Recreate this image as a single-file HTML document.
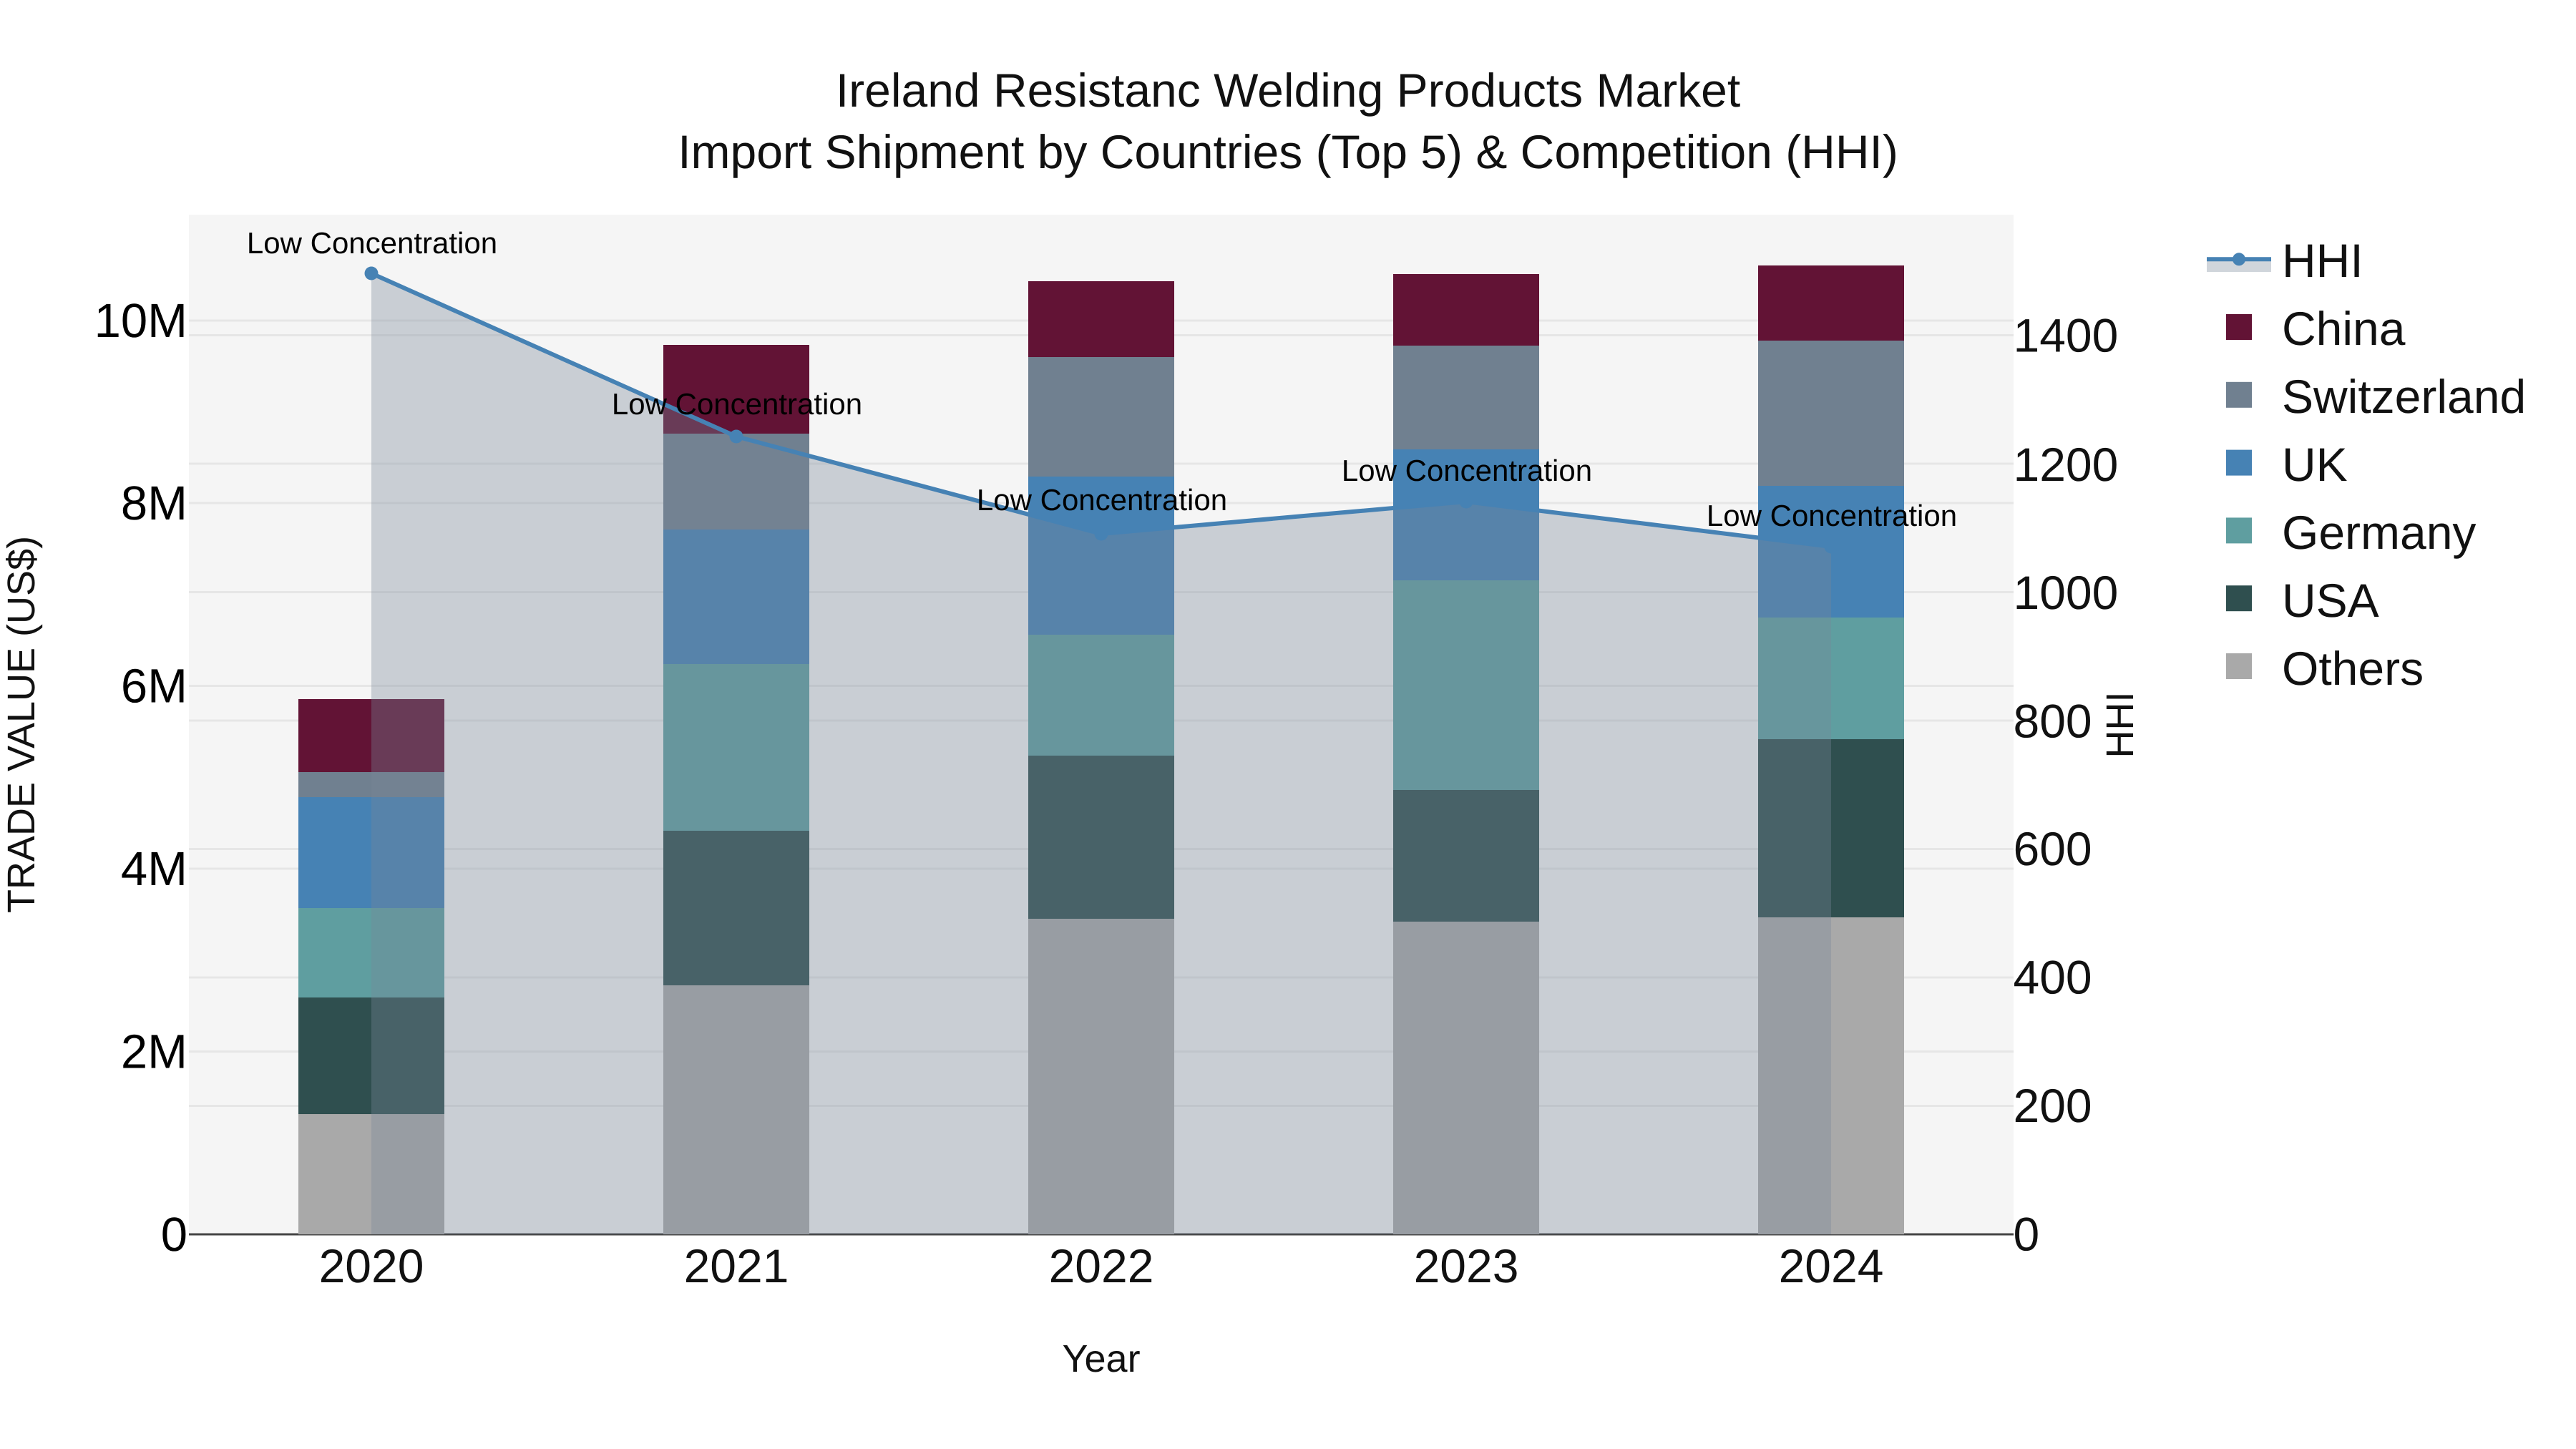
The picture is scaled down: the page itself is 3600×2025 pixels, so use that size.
<!DOCTYPE html>
<html lang="en">
<head>
<meta charset="utf-8">
<title>Ireland Resistanc Welding Products Market</title>
<style>
html,body{margin:0;padding:0;background:#fff;width:3600px;height:2025px;overflow:hidden}
svg{display:block}
text{font-family:"Liberation Sans",Arial,sans-serif;fill:#111;text-rendering:geometricPrecision}
</style>
</head>
<body>
<svg xmlns="http://www.w3.org/2000/svg" width="3600" height="2025" viewBox="0 0 3600 2025">
<rect width="3600" height="2025" fill="#fff"/>
<rect x="264" y="300" width="2550" height="1425" fill="#f5f5f5"/>

<!-- gridlines -->
<g stroke="#e6e6e6" stroke-width="3">
<path d="M264 1469.5H2814M264 1214H2814M264 958.5H2814M264 703H2814M264 448H2814"/>
<path d="M264 1545.5H2814M264 1366H2814M264 1186.5H2814M264 1007H2814M264 827.5H2814M264 648H2814M264 468.5H2814"/>
</g>
<path d="M264 1725H2814" stroke="#444" stroke-width="3"/>

<!-- bars -->
<g>
<rect x="417" y="977" width="204" height="102" fill="#621335"/>
<rect x="417" y="1079" width="204" height="35" fill="#708090"/>
<rect x="417" y="1114" width="204" height="155" fill="#4682b4"/>
<rect x="417" y="1269" width="204" height="125" fill="#5f9ea0"/>
<rect x="417" y="1394" width="204" height="163" fill="#2f4f4f"/>
<rect x="417" y="1557" width="204" height="168" fill="#a9a9a9"/>

<rect x="927" y="482" width="204" height="124" fill="#621335"/>
<rect x="927" y="606" width="204" height="134" fill="#708090"/>
<rect x="927" y="740" width="204" height="188" fill="#4682b4"/>
<rect x="927" y="928" width="204" height="233" fill="#5f9ea0"/>
<rect x="927" y="1161" width="204" height="216" fill="#2f4f4f"/>
<rect x="927" y="1377" width="204" height="348" fill="#a9a9a9"/>

<rect x="1437" y="393" width="204" height="106" fill="#621335"/>
<rect x="1437" y="499" width="204" height="167" fill="#708090"/>
<rect x="1437" y="666" width="204" height="221" fill="#4682b4"/>
<rect x="1437" y="887" width="204" height="169" fill="#5f9ea0"/>
<rect x="1437" y="1056" width="204" height="228" fill="#2f4f4f"/>
<rect x="1437" y="1284" width="204" height="441" fill="#a9a9a9"/>

<rect x="1947" y="383" width="204" height="100" fill="#621335"/>
<rect x="1947" y="483" width="204" height="145" fill="#708090"/>
<rect x="1947" y="628" width="204" height="183" fill="#4682b4"/>
<rect x="1947" y="811" width="204" height="293" fill="#5f9ea0"/>
<rect x="1947" y="1104" width="204" height="184" fill="#2f4f4f"/>
<rect x="1947" y="1288" width="204" height="437" fill="#a9a9a9"/>

<rect x="2457" y="371" width="204" height="105" fill="#621335"/>
<rect x="2457" y="476" width="204" height="203" fill="#708090"/>
<rect x="2457" y="679" width="204" height="184" fill="#4682b4"/>
<rect x="2457" y="863" width="204" height="170" fill="#5f9ea0"/>
<rect x="2457" y="1033" width="204" height="249" fill="#2f4f4f"/>
<rect x="2457" y="1282" width="204" height="443" fill="#a9a9a9"/>
</g>

<!-- HHI area, line, markers -->
<path d="M519 382L1029 610L1539 746L2049 701L2559 764V1725H519Z" fill="rgba(119,136,153,.35)"/>
<path d="M519 382L1029 610L1539 746L2049 701L2559 764" fill="none" stroke="#4682b4" stroke-width="6" stroke-linejoin="round"/>
<g fill="#4682b4">
<circle cx="519" cy="382" r="9.5"/>
<circle cx="1029" cy="610" r="9.5"/>
<circle cx="1539" cy="746" r="9.5"/>
<circle cx="2049" cy="701" r="9.5"/>
<circle cx="2559" cy="764" r="9.5"/>
</g>

<!-- annotations -->
<g font-size="42" text-anchor="middle">
<text x="520" y="354" style="fill:#000">Low Concentration</text>
<text x="1030" y="579" style="fill:#000">Low Concentration</text>
<text x="1540" y="713" style="fill:#000">Low Concentration</text>
<text x="2050" y="672" style="fill:#000">Low Concentration</text>
<text x="2560" y="735" style="fill:#000">Low Concentration</text>
</g>

<!-- title -->
<g font-size="66" text-anchor="middle">
<text x="1800" y="149">Ireland Resistanc Welding Products Market</text>
<text x="1800" y="235">Import Shipment by Countries (Top 5) &amp; Competition (HHI)</text>
</g>

<!-- left ticks -->
<g font-size="67" text-anchor="end">
<text x="262" y="1748" style="fill:#000">0</text>
<text x="262" y="1492.5" style="fill:#000">2M</text>
<text x="262" y="1237" style="fill:#000">4M</text>
<text x="262" y="981.5" style="fill:#000">6M</text>
<text x="262" y="726" style="fill:#000">8M</text>
<text x="262" y="471" style="fill:#000">10M</text>
</g>

<!-- right ticks -->
<g font-size="66">
<text x="2813.5" y="1747.5">0</text>
<text x="2813.5" y="1568">200</text>
<text x="2813.5" y="1388.5">400</text>
<text x="2813.5" y="1209">600</text>
<text x="2813.5" y="1030.5">800</text>
<text x="2813.5" y="851">1000</text>
<text x="2813.5" y="672">1200</text>
<text x="2813.5" y="491.5">1400</text>
</g>

<!-- x ticks -->
<g font-size="66" text-anchor="middle">
<text x="519" y="1792">2020</text>
<text x="1029" y="1792">2021</text>
<text x="1539" y="1792">2022</text>
<text x="2049" y="1792">2023</text>
<text x="2559" y="1792">2024</text>
</g>

<!-- axis titles -->
<text x="1539" y="1917" font-size="54" text-anchor="middle">Year</text>
<text transform="translate(48 1012.5) rotate(-90)" font-size="54" text-anchor="middle">TRADE VALUE (US$)</text>
<text transform="translate(2981 1013) rotate(-90)" font-size="54" text-anchor="middle">HHI</text>

<!-- legend -->
<rect x="3084" y="362" width="90" height="18" fill="rgba(119,136,153,.35)"/>
<path d="M3084 362.3H3174" stroke="#4682b4" stroke-width="6"/>
<circle cx="3129" cy="362.3" r="9" fill="#4682b4"/>
<rect x="3111" y="439" width="36" height="36" fill="#621335"/>
<rect x="3111" y="533.8" width="36" height="36" fill="#708090"/>
<rect x="3111" y="628.6" width="36" height="36" fill="#4682b4"/>
<rect x="3111" y="723.4" width="36" height="36" fill="#5f9ea0"/>
<rect x="3111" y="818.2" width="36" height="36" fill="#2f4f4f"/>
<rect x="3111" y="913" width="36" height="36" fill="#a9a9a9"/>
<g font-size="66">
<text x="3189" y="387">HHI</text>
<text x="3189" y="482">China</text>
<text x="3189" y="577">Switzerland</text>
<text x="3189" y="672">UK</text>
<text x="3189" y="767">Germany</text>
<text x="3189" y="862">USA</text>
<text x="3189" y="957">Others</text>
</g>
</svg>
</body>
</html>
